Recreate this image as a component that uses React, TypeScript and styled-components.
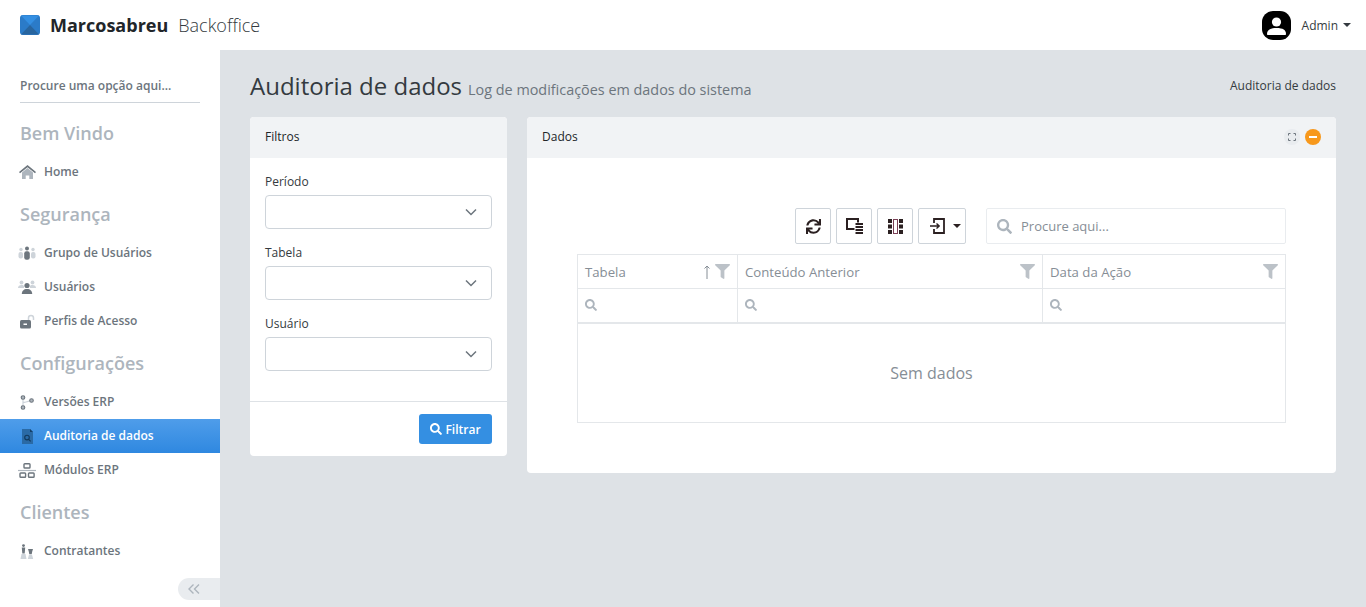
import React from 'react';
import styled, { createGlobalStyle } from 'styled-components';
import { FaSearch, FaFilter, FaSync } from 'react-icons/fa';

const GlobalStyle = createGlobalStyle`
  html, body { margin: 0; padding: 0; height: 100%; }
  body {
    font-family: "Open Sans", "Liberation Sans", sans-serif;
    background: #dee2e6;
    color: #343a40;
  }
  * { box-sizing: border-box; }
`;

const Page = styled.div`
  width: 1366px;
  height: 607px;
  display: flex;
  flex-direction: column;
  overflow: hidden;
`;

const TopBar = styled.header`
  height: 50px;
  flex: none;
  background: #fff;
  display: flex;
  align-items: center;
  padding: 0 15px 0 20px;
`;

const Logo = styled.svg`
  width: 20px;
  height: 20px;
  flex: none;
`;

const Brand = styled.span`
  margin-left: 10px;
  font-size: 18px;
  font-weight: 700;
  color: #212529;
`;

const BrandSub = styled.span`
  margin-left: 10px;
  font-size: 18px;
  font-weight: 300;
  color: #343a40;
`;

const UserArea = styled.div`
  margin-left: auto;
  display: flex;
  align-items: center;
  font-size: 12px;
  color: #343a40;
`;

const Avatar = styled.svg`
  width: 29px;
  height: 29px;
  margin-right: 11px;
`;

const Caret = styled.svg`
  margin-left: 5px;
  width: 8px;
  height: 4px;
  fill: currentColor;
`;

const Body = styled.div`
  flex: 1;
  display: flex;
  min-height: 0;
`;

const Sidebar = styled.aside`
  width: 220px;
  flex: none;
  background: #fff;
  padding-top: 25px;
  position: relative;
`;

const SideSearch = styled.div`
  margin: 0 20px;
  height: 28px;
  padding-top: 2px;
  font-size: 12px;
  font-weight: 600;
  line-height: 18px;
  color: #6c757d;
  border-bottom: 1px solid #ced4da;
`;

const SectionTitle = styled.div<{ $first?: boolean }>`
  height: 24px;
  margin: ${(p) => (p.$first ? '18px' : '13px')} 20px 10px;
  font-size: 18px;
  font-weight: 600;
  line-height: 24px;
  color: #adb5bd;
`;

const NavItem = styled.div<{ $active?: boolean }>`
  height: 34px;
  display: flex;
  align-items: center;
  padding: 0 0 2px 18px;
  font-size: 12px;
  font-weight: 600;
  color: ${(p) => (p.$active ? '#fff' : '#6c757d')};
  background: ${(p) => (p.$active ? 'linear-gradient(#4f9dea, #2f88e0)' : 'transparent')};
`;

const NavIcon = styled.span`
  width: 18px;
  height: 18px;
  padding-top: 2px;
  margin-right: 8px;
  display: flex;
  align-items: center;
  justify-content: center;
  color: #6c757d;
  svg { display: block; }
`;

const CollapseTab = styled.div`
  position: absolute;
  right: 0;
  bottom: 7px;
  width: 42px;
  height: 22px;
  border-radius: 11px 0 0 11px;
  background: #e9ecef;
  color: #adb5bd;
  display: flex;
  align-items: center;
  padding-left: 10px;
`;

const Main = styled.main`
  flex: 1;
  padding: 0 30px;
  min-width: 0;
`;

const TitleRow = styled.div`
  height: 67px;
  padding-top: 18px;
  display: flex;
  align-items: flex-start;
`;

const PageTitle = styled.h1`
  margin: 0;
  font-size: 24px;
  font-weight: 400;
  line-height: 36px;
  color: #343a40;
`;

const PageSub = styled.span`
  margin-left: 6px;
  margin-top: 12px;
  font-size: 14.4px;
  line-height: 20px;
  color: #6c757d;
`;

const Crumb = styled.span`
  margin-left: auto;
  margin-top: 9px;
  font-size: 12px;
  line-height: 18px;
  color: #343a40;
`;

const Columns = styled.div`
  display: flex;
  align-items: flex-start;
  gap: 20px;
`;

const Card = styled.section<{ $width?: number }>`
  ${(p) => (p.$width ? `width: ${p.$width}px; flex: none;` : 'flex: 1;')}
  background: #fff;
  border-radius: 4px;
  overflow: hidden;
`;

const CardHead = styled.div`
  height: 41px;
  padding: 0 15px 2px;
  background: #f1f3f5;
  display: flex;
  align-items: center;
  font-size: 12px;
  font-weight: 500;
  color: #212529;
`;

const HeadButtons = styled.div`
  margin-left: auto;
  display: flex;
  gap: 5px;
`;

const RoundBtn = styled.span<{ $orange?: boolean }>`
  width: 16px;
  height: 16px;
  border-radius: 50%;
  background: ${(p) => (p.$orange ? '#f7981c' : '#e9ecef')};
  display: flex;
  align-items: center;
  justify-content: center;
`;

const FilterBody = styled.div`
  padding: 15px 15px 30px;
  border-bottom: 1px solid #dee2e6;
`;

const Field = styled.div`
  margin-bottom: 15px;
  &:last-child { margin-bottom: 0; }
`;

const FieldLabel = styled.label`
  display: block;
  height: 22px;
  font-size: 12px;
  font-weight: 500;
  line-height: 18px;
  color: #343a40;
`;

const SelectBox = styled.div`
  height: 34px;
  border: 1px solid #ced4da;
  border-radius: 4px;
  display: flex;
  align-items: center;
  justify-content: flex-end;
  padding-right: 14px;
  color: #6c757d;
`;

const FilterFoot = styled.div`
  padding: 12px 15px;
  display: flex;
  justify-content: flex-end;
`;

const PrimaryBtn = styled.button`
  width: 73px;
  height: 30px;
  border: 0;
  border-radius: 3px;
  background: #348fe2;
  color: #fff;
  font: 600 12px "Open Sans", sans-serif;
  display: flex;
  align-items: center;
  justify-content: center;
  gap: 3px;
  padding: 0;
`;

const DataBody = styled.div`
  padding: 50px;
`;

const Toolbar = styled.div`
  display: flex;
  justify-content: flex-end;
  height: 36px;
  margin-bottom: 10px;
`;

const ToolBtn = styled.span`
  width: 36px;
  height: 36px;
  margin-right: 5px;
  border: 1px solid #ced4da;
  border-radius: 2px;
  background: #fff;
  display: flex;
  align-items: center;
  justify-content: center;
  color: #2b2021;
`;

const ExportBtn = styled(ToolBtn)`
  width: 48px;
  justify-content: flex-start;
  padding-left: 11px;
  gap: 3px;
`;

const SearchBox = styled.div`
  width: 300px;
  height: 36px;
  margin-left: 15px;
  border: 1px solid #e9ecef;
  border-radius: 2px;
  display: flex;
  align-items: center;
  padding-left: 10px;
  gap: 9px;
  font-size: 13px;
  color: #868e96;
`;

const Grid = styled.div`
  border: 1px solid #e4e7ea;
`;

const GridRow = styled.div<{ $thick?: boolean }>`
  display: grid;
  grid-template-columns: 159px 305px 1fr;
  height: ${(p) => (p.$thick ? 35 : 34)}px;
  border-bottom: ${(p) => (p.$thick ? 2 : 1)}px solid #e4e7ea;
`;

const HeadCell = styled.div<{ $search?: boolean }>`
  display: flex;
  align-items: center;
  padding: 0 7px ${(p) => (p.$search ? 2 : 0)}px;
  font-size: 13.2px;
  color: #868e96;
  border-left: 1px solid #e4e7ea;
  &:first-child { border-left: 0; }
`;

const HeadIcons = styled.span`
  margin-left: auto;
  display: flex;
  align-items: center;
  gap: 5px;
`;

const Empty = styled.div`
  height: 98px;
  display: flex;
  align-items: center;
  justify-content: center;
  font-size: 16px;
  color: #868e96;
`;

const HomeIcon = () => (
  <svg width="17" height="14" viewBox="0 0 17 14">
    <path d="M3 7.5L8.5 3 14 7.5V14h-3.7v-3.5H6.7V14H3z" fill="#adb5bd" />
    <path d="M0 7L8.5 0 17 7l-1 1.2-7.5-6-7.5 6z" fill="#6c757d" />
  </svg>
);

const GroupIcon = () => (
  <svg width="18" height="14" viewBox="0 0 18 14">
    <circle cx="3" cy="3.5" r="1.7" fill="#ced4da" />
    <rect x="0.5" y="6" width="4.5" height="6.5" rx="2" fill="#ced4da" />
    <circle cx="15" cy="3.5" r="1.7" fill="#ced4da" />
    <rect x="13" y="6" width="4.5" height="6.5" rx="2" fill="#ced4da" />
    <circle cx="9" cy="2.5" r="2" fill="#6c757d" />
    <rect x="6.2" y="5.2" width="5.6" height="8.5" rx="2.2" fill="#6c757d" />
  </svg>
);

const UsersIcon = () => (
  <svg width="18" height="14" viewBox="0 0 18 14">
    <circle cx="3.5" cy="2.5" r="1.9" fill="#ced4da" />
    <path d="M0 8c0-2 1.5-3 3.5-3S6 5.5 6 6.5V8z" fill="#ced4da" />
    <circle cx="14.5" cy="2.5" r="1.9" fill="#ced4da" />
    <path d="M18 8c0-2-1.5-3-3.5-3S12 5.5 12 6.5V8z" fill="#ced4da" />
    <circle cx="9" cy="5.5" r="2.6" fill="#6c757d" />
    <path d="M3.8 14c0-3 2-5 5.2-5s5.2 2 5.2 5z" fill="#6c757d" />
  </svg>
);

const LockIcon = () => (
  <svg width="16" height="15" viewBox="0 0 16 15">
    <path d="M9.5 6V4a2.5 2.5 0 0 1 5 0v2" fill="none" stroke="#ced4da" strokeWidth="1.5" />
    <rect x="1" y="6" width="11" height="8.5" rx="1.5" fill="#6c757d" />
    <rect x="4.5" y="9.5" width="3.5" height="1.5" fill="#fff" />
  </svg>
);

const BranchIcon = () => (
  <svg width="14" height="15" viewBox="0 0 14 15">
    <path d="M3 3v9M3 7.5c2 0 5-1 8-2" fill="none" stroke="#ced4da" strokeWidth="1.2" />
    <circle cx="3" cy="2.5" r="1.8" fill="#adb5bd" stroke="#6c757d" strokeWidth="1.1" />
    <circle cx="3" cy="12.5" r="1.8" fill="#adb5bd" stroke="#6c757d" strokeWidth="1.1" />
    <circle cx="11.5" cy="5.5" r="1.8" fill="#adb5bd" stroke="#6c757d" strokeWidth="1.1" />
  </svg>
);

const AuditIcon = () => (
  <svg width="11" height="15" viewBox="0 0 11 15">
    <path d="M0 0h8l3 3v12H0z" fill="#2a6aa6" />
    <path d="M8 0l3 3H8z" fill="#143f68" />
    <circle cx="5" cy="8.6" r="2.3" fill="none" stroke="#123a5e" strokeWidth="1.1" />
    <path d="M6.6 10.3L8.6 12.4" stroke="#123a5e" strokeWidth="1.2" />
  </svg>
);

const ModulesIcon = () => (
  <svg width="18" height="15" viewBox="0 0 18 15">
    <rect x="6" y="0.8" width="6" height="4.2" rx="0.8" fill="none" stroke="#6c757d" strokeWidth="1.4" />
    <path d="M0 7.5h18" stroke="#adb5bd" strokeWidth="1.2" />
    <rect x="2" y="10" width="5.6" height="4.2" rx="0.8" fill="none" stroke="#6c757d" strokeWidth="1.4" />
    <rect x="10.5" y="10" width="5.6" height="4.2" rx="0.8" fill="none" stroke="#6c757d" strokeWidth="1.4" />
  </svg>
);

const ChessIcon = () => (
  <svg width="14" height="15" viewBox="0 0 14 15">
    <circle cx="3.5" cy="1.6" r="1.4" fill="#6c757d" />
    <path d="M1.8 3.5h3.4l-.5 6H2.300z" fill="#6c757d" />
    <path d="M1.500 10h4l1 5H.5z" fill="#ced4da" />
    <path d="M8 5h5l-.7 2.200-.6 3H9.300l-.6-3z" fill="#6c757d" />
    <path d="M9 10.800h3l1.200 4.200H7.800z" fill="#ced4da" />
  </svg>
);

const CopyIcon = () => (
  <svg width="17" height="16" viewBox="0 0 17 16">
    <path d="M1 1h11v10H1z" fill="none" stroke="#2b2021" strokeWidth="2" />
    <rect x="8.500" y="4.500" width="8.500" height="11.500" fill="#fff" />
    <path d="M9.500 6h7.500M9.500 9h7.500M9.500 12h7.500M9.500 15h7.500" stroke="#2b2021" strokeWidth="2" />
  </svg>
);

const ColumnsIcon = () => (
  <svg width="15" height="15" viewBox="0 0 15 15">
    <path d="M0 0h4v4H0zM0 5.500h4v4H0zM0 11h4v4H0zM11 0h4v4h-4zM11 5.500h4v4h-4zM11 11h4v4h-4z" fill="#2b2021" />
    <rect x="5.500" y="0.500" width="4" height="14" fill="#fff" stroke="#7a3f55" strokeWidth="1" />
  </svg>
);

const ExportIcon = () => (
  <svg width="15" height="16" viewBox="0 0 15 16">
    <path d="M4 5V1h10v14H4v-4" fill="none" stroke="#2b2021" strokeWidth="1.800" />
    <path d="M0 8h9M6.500 5.500L9.200 8l-2.700 2.500" fill="none" stroke="#2b2021" strokeWidth="1.400" />
  </svg>
);

const Chevron = () => (
  <svg width="12" height="8" viewBox="0 0 12 8">
    <path d="M1 1.500l5 5 5-5" fill="none" stroke="currentColor" strokeWidth="1.500" />
  </svg>
);

const columns = ['Tabela', 'Conteúdo Anterior', 'Data da Ação'];
const fields = ['Período', 'Tabela', 'Usuário'];

const App = () => (
  <Page>
    <GlobalStyle />
    <TopBar>
      <Logo viewBox="0 0 20 20">
        <rect width="20" height="20" rx="3" fill="#2b7bc8" />
        <path d="M1 0.500h18L10 10z" fill="#348fe2" />
        <path d="M1 19.500h18L10 10z" fill="#28659f" />
      </Logo>
      <Brand>Marcosabreu</Brand>
      <BrandSub>Backoffice</BrandSub>
      <UserArea>
        <Avatar viewBox="0 0 29 29">
          <rect width="29" height="29" rx="11" fill="#000" />
          <circle cx="14.500" cy="11" r="4.600" fill="#fff" />
          <path d="M5 23c0-4 3-6 9.500-6s9.500 2 9.500 6c0 .6-.4 1-1 1H6c-.6 0-1-.4-1-1z" fill="#fff" />
        </Avatar>
        Admin
        <Caret viewBox="0 0 8 4"><path d="M0 0h8L4 4z" /></Caret>
      </UserArea>
    </TopBar>
    <Body>
      <Sidebar>
        <SideSearch>Procure uma opção aqui...</SideSearch>
        <SectionTitle $first>Bem Vindo</SectionTitle>
        <NavItem><NavIcon><HomeIcon /></NavIcon>Home</NavItem>
        <SectionTitle>Segurança</SectionTitle>
        <NavItem><NavIcon><GroupIcon /></NavIcon>Grupo de Usuários</NavItem>
        <NavItem><NavIcon><UsersIcon /></NavIcon>Usuários</NavItem>
        <NavItem><NavIcon><LockIcon /></NavIcon>Perfis de Acesso</NavItem>
        <SectionTitle>Configurações</SectionTitle>
        <NavItem><NavIcon><BranchIcon /></NavIcon>Versões ERP</NavItem>
        <NavItem $active><NavIcon><AuditIcon /></NavIcon>Auditoria de dados</NavItem>
        <NavItem><NavIcon><ModulesIcon /></NavIcon>Módulos ERP</NavItem>
        <SectionTitle>Clientes</SectionTitle>
        <NavItem><NavIcon><ChessIcon /></NavIcon>Contratantes</NavItem>
        <CollapseTab>
          <svg width="12" height="10" viewBox="0 0 12 10">
            <path d="M5.500 0.500L1 5l4.500 4.500M11 0.500L6.500 5l4.500 4.500" fill="none" stroke="currentColor" strokeWidth="1.400" />
          </svg>
        </CollapseTab>
      </Sidebar>
      <Main>
        <TitleRow>
          <PageTitle>Auditoria de dados</PageTitle>
          <PageSub>Log de modificações em dados do sistema</PageSub>
          <Crumb>Auditoria de dados</Crumb>
        </TitleRow>
        <Columns>
          <Card $width={257}>
            <CardHead>Filtros</CardHead>
            <FilterBody>
              {fields.map((f) => (
                <Field key={f}>
                  <FieldLabel>{f}</FieldLabel>
                  <SelectBox><Chevron /></SelectBox>
                </Field>
              ))}
            </FilterBody>
            <FilterFoot>
              <PrimaryBtn><FaSearch size={12} />Filtrar</PrimaryBtn>
            </FilterFoot>
          </Card>
          <Card>
            <CardHead>
              Dados
              <HeadButtons>
                <RoundBtn>
                  <svg width="8" height="8" viewBox="0 0 8 8">
                    <path d="M0.500 2.500v-2h2M5.500 0.500h2v2M7.500 5.500v2h-2M2.500 7.500h-2v-2" fill="none" stroke="#6c757d" strokeWidth="1" />
                  </svg>
                </RoundBtn>
                <RoundBtn $orange>
                  <svg width="8" height="2" viewBox="0 0 8 2"><rect width="8" height="2" fill="#fff" /></svg>
                </RoundBtn>
              </HeadButtons>
            </CardHead>
            <DataBody>
              <Toolbar>
                <ToolBtn><FaSync size={15} /></ToolBtn>
                <ToolBtn><CopyIcon /></ToolBtn>
                <ToolBtn><ColumnsIcon /></ToolBtn>
                <ExportBtn><ExportIcon /><Caret viewBox="0 0 8 4"><path d="M0 0h8L4 4z" /></Caret></ExportBtn>
                <SearchBox><FaSearch size={15} color="#adb5bd" />Procure aqui...</SearchBox>
              </Toolbar>
              <Grid>
                <GridRow>
                  {columns.map((c, i) => (
                    <HeadCell key={c}>
                      {c}
                      <HeadIcons>
                        {i === 0 && (
                          <svg width="6" height="14" viewBox="0 0 6 14">
                            <path d="M3 14V1M0.500 3.500L3 1l2.500 2.500" fill="none" stroke="#868e96" strokeWidth="1" />
                          </svg>
                        )}
                        <FaFilter size={15} color="#bcc2c8" />
                      </HeadIcons>
                    </HeadCell>
                  ))}
                </GridRow>
                <GridRow $thick>
                  {columns.map((c) => (
                    <HeadCell key={c} $search><FaSearch size={12} color="#adb5bd" /></HeadCell>
                  ))}
                </GridRow>
                <Empty>Sem dados</Empty>
              </Grid>
            </DataBody>
          </Card>
        </Columns>
      </Main>
    </Body>
  </Page>
);

export default App;
